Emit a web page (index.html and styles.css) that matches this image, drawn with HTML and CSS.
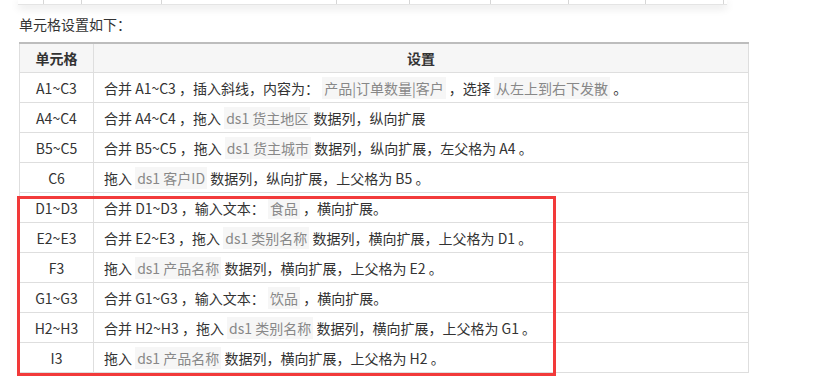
FILE: index.html
```html
<!DOCTYPE html>
<html lang="zh-CN">
<head>
<meta charset="utf-8">
<link rel="stylesheet" href="styles.css">
</head>
<body>
<div class="page">
  <div class="shot">
    <span class="c c1"></span><span class="c c2"></span><span class="c c3"></span><span class="c c4"></span><span class="c c5"></span><span class="c c6"></span><span class="c c7"></span><span class="c c8"></span><span class="c c9"></span>
  </div>
  <p class="intro">单元格设置如下：</p>
  <div class="tablewrap">
    <table class="cells">
      <thead>
        <tr><th class="col1">单元格</th><th>设置</th></tr>
      </thead>
      <tbody>
        <tr><td class="col1">A1~C3</td><td>合并 A1~C3 ，插入斜线，内容为： <code>产品|订单数量|客户</code> ，选择 <code>从左上到右下发散</code> 。</td></tr>
        <tr><td class="col1">A4~C4</td><td>合并 A4~C4 ，拖入 <code>ds1 货主地区</code> 数据列，纵向扩展</td></tr>
        <tr><td class="col1">B5~C5</td><td>合并 B5~C5 ，拖入 <code>ds1 货主城市</code> 数据列，纵向扩展，左父格为 A4 。</td></tr>
        <tr><td class="col1">C6</td><td>拖入 <code>ds1 客户ID</code> 数据列，纵向扩展，上父格为 B5 。</td></tr>
        <tr><td class="col1">D1~D3</td><td>合并 D1~D3 ，输入文本： <code>食品</code> ，横向扩展。</td></tr>
        <tr><td class="col1">E2~E3</td><td>合并 E2~E3 ，拖入 <code>ds1 类别名称</code> 数据列，横向扩展，上父格为 D1 。</td></tr>
        <tr><td class="col1">F3</td><td>拖入 <code>ds1 产品名称</code> 数据列，横向扩展，上父格为 E2 。</td></tr>
        <tr><td class="col1">G1~G3</td><td>合并 G1~G3 ，输入文本： <code>饮品</code> ，横向扩展。</td></tr>
        <tr><td class="col1">H2~H3</td><td>合并 H2~H3 ，拖入 <code>ds1 类别名称</code> 数据列，横向扩展，上父格为 G1 。</td></tr>
        <tr><td class="col1">I3</td><td>拖入 <code>ds1 产品名称</code> 数据列，横向扩展，上父格为 H2 。</td></tr>
      </tbody>
    </table>
    <div class="highlight"></div>
  </div>
</div>
</body>
</html>
```

FILE: styles.css
```css
html, body {
  margin: 0;
  padding: 0;
  background: #fff;
}
body {
  font-family: "Noto Sans CJK SC", "Noto Sans", sans-serif;
  font-size: 14px;
  color: #333;
  width: 813px;
  height: 387px;
  overflow: hidden;
}
.page {
  padding-left: 19px;
}
.shot {
  position: relative;
  margin-left: -1px;
  width: 709px;
  height: 4px;
  background: #fff;
  border-bottom: 1px solid #e4e4e4;
  box-shadow: 0 3px 8px rgba(0, 0, 0, 0.12);
}
.c {
  position: absolute;
  top: 0;
  width: 1px;
  height: 4px;
  background: #d6d6d6;
}
.c1 { left: 25px; }
.c2 { left: 63px; }
.c3 { left: 143px; }
.c4 { left: 318px; }
.c5 { left: 391px; }
.c6 { left: 472px; }
.c7 { left: 550px; }
.c8 { left: 627px; }
.c9 { left: 705px; }
.intro {
  margin: 0;
  padding-top: 9px;
  line-height: 20px;
  height: 20px;
}
.tablewrap {
  position: relative;
  margin-top: 8px;
  width: 730px;
}
.cells {
  width: 730px;
  border-collapse: collapse;
  border-top: 2px solid #bdbdbd;
  table-layout: fixed;
}
.cells th, .cells td {
  border: 1px solid #dedede;
  line-height: 20px;
  padding: 5px 10px 4px;
  text-align: left;
  white-space: nowrap;
}
.cells th {
  background: #f6f6f6;
  font-weight: bold;
  text-align: center;
  padding: 4px 10px 4px;
}
.cells .col1 {
  width: 53px;
  text-align: center;
}
.cells code {
  font-family: inherit;
  font-size: 14px;
  color: #888;
  background: #f6f6f6;
  padding: 1px 2px;
}
.highlight {
  position: absolute;
  left: -2px;
  top: 154px;
  width: 533px;
  height: 174px;
  border: 3px solid #f23a3a;
}
```
